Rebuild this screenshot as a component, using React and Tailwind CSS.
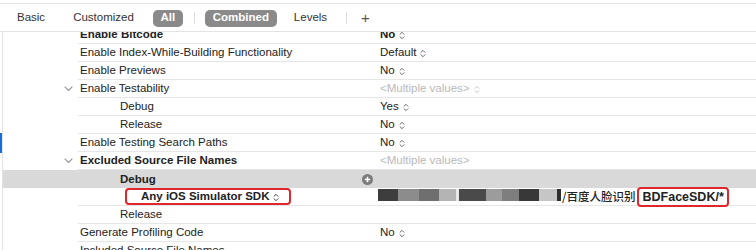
import { Fragment } from 'react'

function UpDown({ color = '#6b6b6b' }) {
  return (
    <svg width="6" height="9" viewBox="0 0 6 9" className="ml-[4px] shrink-0">
      <path d="M1 3.3 L3 1.3 L5 3.3 M1 5.7 L3 7.7 L5 5.7" fill="none" stroke={color} strokeWidth="1" strokeLinecap="round" strokeLinejoin="round" />
    </svg>
  )
}

function Chevron() {
  return (
    <svg width="9" height="6" viewBox="0 0 9 6">
      <path d="M1 1 L4.5 4.5 L8 1" fill="none" stroke="#9a9a9a" strokeWidth="1.1" strokeLinecap="round" strokeLinejoin="round" />
    </svg>
  )
}

function PlusCircle() {
  return (
    <svg width="11" height="11" viewBox="0 0 11 11">
      <circle cx="5.5" cy="5.5" r="5.5" fill="#7b7b7b" />
      <path d="M5.5 2.8 V8.2 M2.8 5.5 H8.2" stroke="#fff" strokeWidth="1.6" />
    </svg>
  )
}

const rows = [
  { name: 'Enable Bitcode', value: 'No', bold: true },
  { name: 'Enable Index-While-Building Functionality', value: 'Default' },
  { name: 'Enable Previews', value: 'No' },
  { name: 'Enable Testability', value: '<Multiple values>', muted: true, open: true },
  { name: 'Debug', value: 'Yes', indent: true },
  { name: 'Release', value: 'No', indent: true },
  { name: 'Enable Testing Search Paths', value: 'No' },
  { name: 'Excluded Source File Names', value: '<Multiple values>', muted: true, open: true, bold: true, noArrow: true },
  { name: 'Debug', indent: true, bold: true, selected: true },
  { kind: 'sdk' },
  { name: 'Release', indent: true },
  { name: 'Generate Profiling Code', value: 'No' },
  { name: 'Included Source File Names', value: '' },
]

// pixelated (redacted) path segment
const blur = [
  ['w-[20px]', 'bg-[#3d3d3d]'],
  ['w-[21px]', 'bg-[#8c8c8c]'],
  ['w-[20px]', 'bg-[#6f6f6f]'],
  ['w-[17px]', 'bg-[#b4b4b4]'],
  ['w-[3px]', 'bg-[#e8e8e8]'],
  ['w-[27px]', 'bg-[#4a4a4a]'],
  ['w-[16px]', 'bg-[#9c9c9c]'],
  ['w-[17px]', 'bg-[#7e7e7e]'],
  ['w-[20px]', 'bg-[#383838]'],
  ['w-[18px]', 'bg-[#c6c6c6]'],
  ['w-[4px]', 'bg-[#2e2e2e]'],
]

function Row({ row }) {
  if (row.kind === 'sdk') {
    return (
      <div className="flex h-[18px]">
        <div className="w-[75px]" />
        <div className="flex flex-1 border-b border-[#e6e6e6]">
          <div className="w-[300px] flex items-center pl-[47px]">
            <span className="flex items-center h-[17px] w-[166px] border-2 border-[#e0282c] rounded-[4px] pl-[14px] pt-[1px] font-bold">
              Any iOS Simulator SDK<UpDown color="#444" />
            </span>
          </div>
          <div className="flex items-center flex-1 font-bold">
            <div className="flex h-[12px] -mt-[4px]">
              {blur.map(([w, c], i) => <div key={i} className={`${w} ${c} h-[12px]`} />)}
            </div>
            <span className="ml-[1px] pt-[1px] font-['Noto_Sans_CJK_SC',sans-serif] text-[11.5px] font-medium">/百度人脸识别</span>
            <span className="ml-[2px] flex items-center h-[20px] px-[3px] pt-[1px] border-2 border-[#e0282c] rounded-[4px] text-[12.5px]">BDFaceSDK/*</span>
          </div>
        </div>
      </div>
    )
  }
  return (
    <div className={`flex h-[18px] ${row.selected ? 'bg-[#d9d9d9]' : ''}`}>
      <div className="w-[75px] flex items-center justify-end pr-[5px]">
        {row.open && <Chevron />}
      </div>
      <div className={`flex flex-1 ${row.selected ? '' : 'border-b border-[#e6e6e6]'}`}>
        <div className={`w-[300px] flex items-center justify-between pr-[5px] pt-[1px] ${row.indent ? 'pl-[42px]' : 'pl-[2px]'} ${row.bold ? 'font-bold' : ''}`}>
          <span>{row.name}</span>
          {row.selected && <PlusCircle />}
        </div>
        <div className={`flex items-center flex-1 pl-[2px] pt-[1px] ${row.muted ? 'text-[#b9b9b9]' : ''} ${row.bold && !row.muted ? 'font-bold' : ''}`}>
          {row.value && (
            <Fragment>
              <span>{row.value}</span>
              {!row.noArrow && <UpDown color={row.muted ? '#c4c4c4' : '#6b6b6b'} />}
            </Fragment>
          )}
        </div>
      </div>
    </div>
  )
}

export default function App() {
  return (
    <div className="w-[756px] h-[250px] overflow-hidden bg-white font-['Liberation_Sans',Arial,sans-serif] text-[11.5px] text-[#222]">
      <div className="mt-[3px] h-[29px] border-t border-b border-[#e3e3e3] flex items-center pt-[1px] text-[#333]">
        <span className="ml-[17px]">Basic</span>
        <span className="ml-[28px]">Customized</span>
        <span className="ml-[19px] h-[17px] w-[30px] rounded-[5px] bg-[#8a8a8a] text-white font-bold flex items-center justify-center">All</span>
        <span className="ml-[11px] w-px h-[12px] bg-[#dcdcdc]" />
        <span className="ml-[10px] h-[17px] w-[72px] rounded-[5px] bg-[#8a8a8a] text-white font-bold flex items-center justify-center">Combined</span>
        <span className="ml-[17px]">Levels</span>
        <span className="ml-[19px] w-px h-[12px] bg-[#dcdcdc]" />
        <span className="ml-[14px] text-[15px] font-light text-[#555]">+</span>
      </div>
      <div className="flex h-[220px]">
        <div className="w-[3px] border-r border-[#e3e3e3] flex flex-col">
          <div className="h-[101px]" />
          <div className="h-[20px] w-[2px] bg-[#1470d8]" />
        </div>
        <div className="flex-1 overflow-hidden">
          <div className="-mt-[6px]">
            {rows.map((r, i) => <Row key={i} row={r} />)}
          </div>
        </div>
      </div>
    </div>
  )
}
